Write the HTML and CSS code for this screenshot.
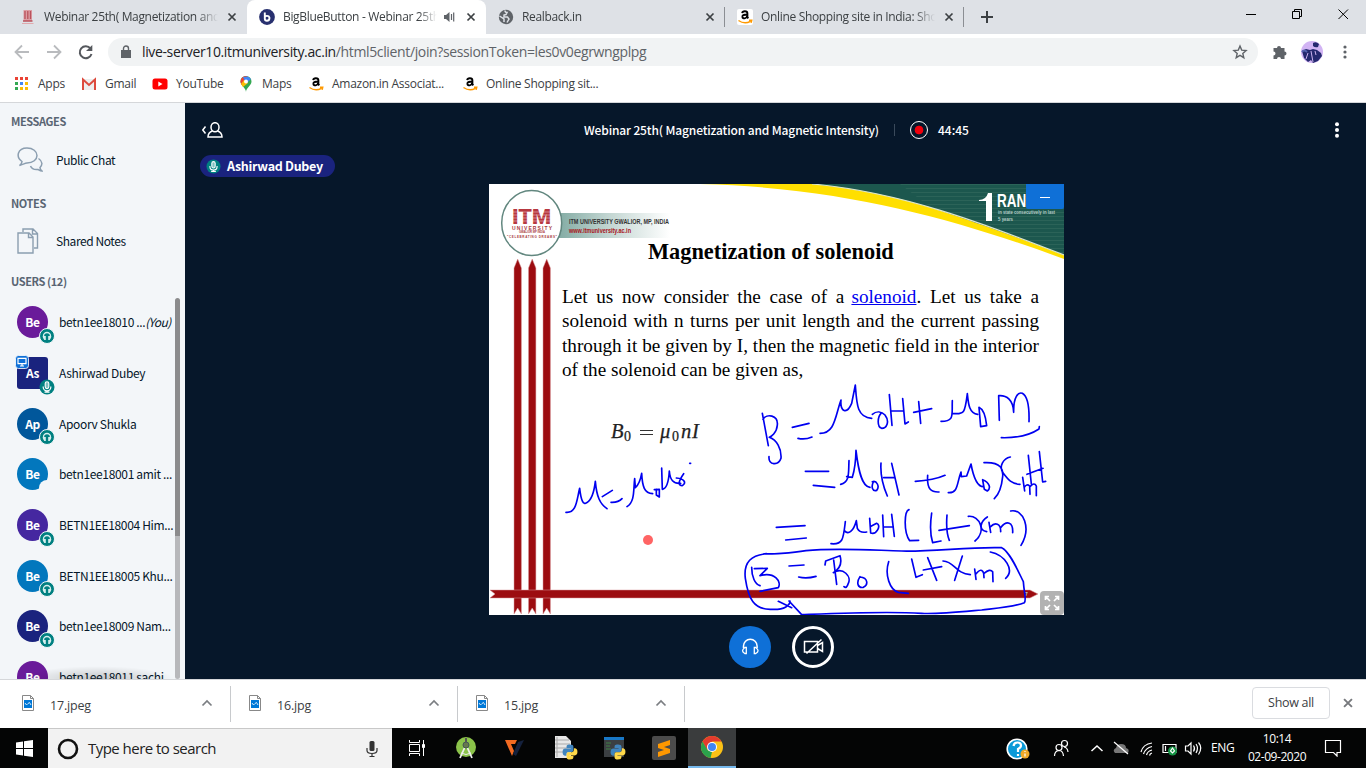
FILE: index.html
```html
<!DOCTYPE html>
<html lang="en">
<head>
<meta charset="utf-8">
<title>BigBlueButton - Webinar 25th</title>
<link rel="stylesheet" href="styles.css">
</head>
<body>
<svg class="defs" width="0" height="0">
  <symbol id="x" viewBox="0 0 16 16"><path d="M4.500 4.500l7 7M11.500 4.500l-7 7" stroke="currentColor" stroke-width="1.700"/></symbol>
  <symbol id="amazon" viewBox="0 0 16 16"><rect width="16" height="16" rx="2" fill="#fff"/><path d="M5.200 4.200C5.500 1.600 10.400 1.500 10.400 4.500V8.200l.9 1.200M10.200 5.500C6.500 5.500 5.300 6.300 5.400 7.900c.2 2.300 4.300 1.800 4.800-.8" fill="none" stroke="#000" stroke-width="1.900"/><path d="M1.500 11.500q6 4.200 12 .8M12 11.300l2.700-.1-.6 2.500" fill="none" stroke="#f90" stroke-width="1.500"/></symbol>
  <symbol id="head" viewBox="0 0 16 16"><circle cx="8" cy="8" r="7.500" fill="#008081" stroke="#f3f6f9"/><path d="M4.500 9.500V8a3.500 3.500 0 0 1 7 0v1.500" fill="none" stroke="#d5eeee" stroke-width="1.300"/><path d="M3.800 8h3v3.900H5.300Q3.800 11 3.800 8M12.200 8H9.200v3.900h1.500Q12.200 11 12.200 8" fill="#d5eeee"/></symbol>
  <symbol id="mic" viewBox="0 0 16 16"><circle cx="8" cy="8" r="7.500" fill="#008081"/><rect x="6.200" y="2.800" width="3.600" height="6.800" rx="1.800" fill="#7fc0c0" stroke="#fff" stroke-width="1.100"/><path d="M4.200 7.500v.8a3.800 3.500 0 0 0 7.600 0v-.8M8 11.800v1.600M5.500 13.200h5" fill="none" stroke="#fff" stroke-width="1.200"/></symbol>
  <symbol id="file" viewBox="0 0 14 16"><path d="M1.500.5h8l3 3v12h-11z" fill="#fff" stroke="#888"/><path d="M9.500.5v3h3" fill="none" stroke="#888"/><path d="M3 5h8v8H3z" fill="#0078d7"/><path d="M4 8l1.500 2L7 8.500 8.500 7.500 10 10" fill="none" stroke="#fff" stroke-width=".8"/></symbol>
  <symbol id="up" viewBox="0 0 12 12"><path d="M1.500 8.500L6 4l4.500 4.500" fill="none" stroke="#7b7e82" stroke-width="1.700"/></symbol>
  <symbol id="python" viewBox="0 0 14 14"><path d="M7 .5c-3 0-3 1-3 3h3.500V4H3C1 4 .500 5.500 .500 7.200s.7 3 2.500 3h1V8.500Q4 7 5.500 7h3Q10 7 10 5.500v-3Q10 .5 7 .5" fill="#4084bd"/><path d="M7 13.500c3 0 3-1 3-3H6.500V10H11c2 0 2.500-1.500 2.500-3.200s-.7-3-2.500-3h-.6v1.700Q10 7.300 8.500 7.300h-3Q4 7.500 4 9v2.500q0 2 3 2" fill="#ffd94a"/></symbol>
</svg>

<header class="tabs">
  <div class="tab">
    <svg class="i16" viewBox="0 0 16 16"><path d="M3.500 1h8.500v11H3.500z" fill="#dc9da3"/><path d="M5 2v8M7.800 2v8M10.500 2v8M3 12h9.500" stroke="#b9525c" stroke-width="1.300"/><path d="M2 14.500h11.500" stroke="#dfa9ad"/></svg>
    <span class="ttl">Webinar 25th( Magnetization and</span><svg class="i16"><use href="#x"/></svg>
  </div>
  <div class="tab active">
    <svg class="i16" viewBox="0 0 16 16"><circle cx="8" cy="8" r="7.900" fill="#28306f"/><path d="M5.800 3.500v6.200q0 2 2.200 2t2.400-2V8.500q-.4-1.600-2.400-1.600-1.500 0-2.200 1" fill="none" stroke="#fff" stroke-width="1.900"/></svg>
    <span class="ttl short">BigBlueButton - Webinar 25th</span>
    <svg class="i16 spk" viewBox="0 0 16 16"><path d="M3 6h2l3.500-3v10L5 10H3z" fill="#5f6368"/><path d="M10.500 5v6M12.700 3.500v9" stroke="#5f6368" stroke-width="1.200"/></svg>
    <svg class="i16"><use href="#x"/></svg>
  </div>
  <div class="tab sep">
    <svg class="i16" viewBox="0 0 16 16"><circle cx="8" cy="8" r="7.200" fill="#5f6368"/><path d="M7 1.500q0 2 2 2l-1 2-2 .5v2h3.500L11 10l-2 3.500M1.500 7L6 10v3" fill="none" stroke="#dee1e6" stroke-width="1.500"/></svg>
    <span class="ttl">Realback.in</span><svg class="i16"><use href="#x"/></svg>
  </div>
  <div class="tab sep">
    <svg class="i16"><use href="#amazon"/></svg>
    <span class="ttl">Online Shopping site in India: Shop</span><svg class="i16"><use href="#x"/></svg>
  </div>
  <svg class="plus" width="14" height="14" viewBox="0 0 14 14"><path d="M7 1v12M1 7h12" stroke="#3c4043" stroke-width="2"/></svg>
  <svg class="win" width="104" height="12" viewBox="0 0 104 12" fill="none" stroke="#000"><path d="M1 6.500h10M47.500 3.500h7v7h-7zM49.500 3.500v-2h7v7h-2M93.500 1.500l9.500 9.500M103 1.500L93.500 11"/></svg>
</header>

<div class="toolbar">
  <svg width="84" height="20" viewBox="0 0 84 20" fill="none"><path d="M15 10H2M8 3.500L1.500 10 8 16.500M33 10h13M40 3.500L46.500 10 40 16.500" stroke="#b9bbbe" stroke-width="1.800"/><path d="M76.500 6.500a6 6 0 1 0 1 5.500" stroke="#55585d" stroke-width="2"/><path d="M78.300 3v6H72z" fill="#55585d"/></svg>
  <div class="omni">
    <svg width="10" height="14" viewBox="0 0 10 14"><path d="M0 5h10v8H0z" fill="#5f6368"/><path d="M2.500 6V3.500a2.500 2.500 0 0 1 5 0V6" fill="none" stroke="#5f6368" stroke-width="1.400"/></svg>
    <span class="url">live-server10.itmuniversity.ac.in<i>/html5client/join?sessionToken=les0v0egrwngplpg</i></span>
    <svg class="star" width="16" height="16" viewBox="0 0 16 16"><path d="M8 2l1.700 4.100 4.400.4-3.300 2.900 1 4.300L8 11.400l-3.800 2.300 1-4.300-3.300-2.900 4.400-.4z" fill="none" stroke="#5f6368" stroke-width="1.400"/></svg>
  </div>
  <svg class="ext" width="16" height="16" viewBox="0 0 16 16"><path d="M1.500 4H5a2 2 0 1 1 4 0h3.500v3.500a2 2 0 1 1 0 4V15H9a2 2 0 0 0-4 0H1.500v-3.500a2 2 0 0 0 0-4z" fill="#5f6368"/></svg>
  <svg class="ava" width="22" height="22" viewBox="0 0 22 22"><circle cx="11" cy="11" r="11" fill="#d2b4f4"/><path d="M1 10l4-2 4 1 3-1 4 1 4 3 1 3-4 5-5 2-2-3-3 2-4-4zM12 2q3-2 6 1l-1 3q-3 1-5-1z" fill="#25296f"/><path d="M10 10l2 11M7 12l-2 6M14 10l1 4" stroke="#cdb3f0"/><path d="M1 11q2-3 5 0" stroke="#5563ae" fill="none" stroke-width="2"/></svg>
  <svg width="4" height="14" viewBox="0 0 4 14" fill="#5f6368"><circle cx="2" cy="2" r="1.600"/><circle cx="2" cy="7" r="1.600"/><circle cx="2" cy="12" r="1.600"/></svg>
</div>

<nav class="marks">
  <span class="mk m1"><svg class="i16" viewBox="0 0 16 16"><path d="M2 1h3v3H2zM7 1h3v3H7zM12 1h3v3h-3z" fill="#ea4335"/><path d="M2 6h3v3H2z" fill="#34a853"/><path d="M7 6h3v3H7z" fill="#4285f4"/><path d="M12 6h3v3h-3zM12 11h3v3h-3zM7 11h3v3H7z" fill="#fbbc05"/><path d="M2 11h3v3H2z" fill="#34a853"/></svg>Apps</span>
  <span class="mk m2"><svg class="i16" viewBox="0 0 16 16"><path d="M1 3h14v11H1z" fill="#eee"/><path d="M2 14V3.500l6 5.500 6-5.500V14" fill="none" stroke="#dd4b3e" stroke-width="2"/></svg>Gmail</span>
  <span class="mk m3"><svg class="i16" viewBox="0 0 16 16"><rect x=".5" y="2.500" width="15" height="11" rx="2.500" fill="#f00"/><path d="M6.300 5.500v5l4.200-2.500z" fill="#fff"/></svg>YouTube</span>
  <span class="mk m4"><svg class="i16" viewBox="0 0 16 16"><path d="M8 16C8 12 2.500 9.500 2.500 5.500a5.500 5.500 0 0 1 11 0C13.500 9.500 8 12 8 16" fill="#34a853"/><path d="M2.500 6A5.500 5.500 0 0 1 8 0l2 1-6.500 8z" fill="#ea4335"/><path d="M5 1l5-.5L13 3 8 8z" fill="#4285f4"/><path d="M3 8l3-4 4 3-5 4z" fill="#fbbc04"/><circle cx="8" cy="5.500" r="2" fill="#fff"/></svg>Maps</span>
  <span class="mk m5"><svg class="i16"><use href="#amazon"/></svg>Amazon.in Associat...</span>
  <span class="mk m6"><svg class="i16"><use href="#amazon"/></svg>Online Shopping sit...</span>
</nav>

<main class="app">
  <aside class="side">
    <h2>MESSAGES</h2>
    <div class="item"><svg width="26" height="26" viewBox="0 0 26 26" fill="none" stroke="#8b9eb0" stroke-width="1.500"><path d="M5 14.500C-1.500 10 .5 1 10 1c6 0 10 3.500 10 7.500S16 16 10 16c-2 0-4 1.500-7.500 2.500Q5 16.500 5 14.500z"/><path d="M21.500 11.500c4.500 3 4 6.500 1.500 9 0 1.500.5 2.500 2 3.500-2 0-3-1-4-1.500-4 .5-6.500-1-7.500-3.500"/></svg><span>Public Chat</span></div>
    <h2 class="h-notes">NOTES</h2>
    <div class="item"><svg width="26" height="26" viewBox="0 0 26 26" fill="none" stroke="#8b9eb0" stroke-width="1.400"><path d="M1 5h11l4 4v16H1zM11.500 5v4.500H16M6 4V1h10l4.500 4.500V20H17M15.500 1v5h5"/></svg><span>Shared Notes</span></div>
    <h2 class="h-users">USERS (12)</h2>
    <div class="users">
      <div class="u"><b class="av c1">Be<svg><use href="#head"/></svg></b><span>betn1ee18010 ... <em>(You)</em></span></div>
      <div class="u"><b class="av sq c2">As<svg><use href="#mic"/></svg><svg class="pres" viewBox="0 0 14 14"><rect x=".5" y=".5" width="13" height="13" rx="3" fill="#0f70d7" stroke="#fff" stroke-width=".8"/><path d="M3 3.300h8v5.400H3zM5 11h4M7 9v2" fill="none" stroke="#fff" stroke-width="1.200"/></svg></b><span>Ashirwad Dubey</span></div>
      <div class="u"><b class="av c3">Ap<svg><use href="#head"/></svg></b><span>Apoorv Shukla</span></div>
      <div class="u"><b class="av c4">Be<svg viewBox="0 0 16 16"><circle cx="8" cy="8" r="8" fill="#f3f6f9"/></svg></b><span>betn1ee18001 amit ...</span></div>
      <div class="u"><b class="av c5">Be<svg><use href="#head"/></svg></b><span>BETN1EE18004 Him...</span></div>
      <div class="u"><b class="av c4">Be<svg><use href="#head"/></svg></b><span>BETN1EE18005 Khu...</span></div>
      <div class="u"><b class="av c2">Be<svg><use href="#head"/></svg></b><span>betn1ee18009 Nam...</span></div>
      <div class="u"><b class="av c1">Be</b><span>betn1ee18011 sachi</span></div>
      <div class="shade"></div>
      <div class="scroll"></div>
    </div>
  </aside>

  <section class="stage">
    <div class="bar">
      <svg class="toggle" width="22" height="16" viewBox="0 0 22 16" fill="none" stroke="#fff" stroke-width="1.500"><path d="M3.500 4.500L.800 8l2.700 3.500"/><ellipse cx="13" cy="5.200" rx="4" ry="4.500"/><path d="M10.500 9C7.500 10 6 12 6 15h14c0-3-1.500-5-4.500-6"/></svg>
      <span class="room">Webinar 25th( Magnetization and Magnetic Intensity)</span>
      <span class="vsep"></span>
      <span class="rec"></span>
      <span class="time">44:45</span>
      <svg class="dots" width="6" height="16" viewBox="0 0 6 16" fill="#fff"><circle cx="3" cy="2.200" r="2"/><circle cx="3" cy="8" r="2"/><circle cx="3" cy="13.800" r="2"/></svg>
    </div>
    <div class="talk"><svg width="15" height="15"><use href="#mic"/></svg><span>Ashirwad Dubey</span></div>

    <div class="slide">
      <svg class="art" width="575" height="431" viewBox="489 184 575 431">
        <defs>
          <pattern id="lines" width="20" height="4" patternUnits="userSpaceOnUse"><rect width="20" height="4" fill="#1c574e"/><rect width="20" height="1" fill="#2b6358"/></pattern>
          <linearGradient id="band"><stop offset="0" stop-color="#7fa9a1"/><stop offset=".45" stop-color="#c0d4d0"/><stop offset="1" stop-color="#fff"/></linearGradient>
        </defs>
        <path d="M700 184C850 188 960 221 1064 259V184z" fill="#ffdf00"/>
        <path d="M812 184C900 192 980 222 1064 255V184z" fill="#1c574e"/>
        <path d="M900 184h164v71C1020 238 960 217 930 207z" fill="url(#lines)"/>
        <path d="M812 184C900 192 980 222 1064 255" fill="none" stroke="#dce5cc" stroke-width="1.200"/>
        <path d="M979 200q7 0 9-7h4v28h-6v-20h-7z" fill="#fff"/>
        <text x="997" y="207" class="rank" textLength="39" lengthAdjust="spacingAndGlyphs">RANK</text>
        <text x="998" y="214" class="tiny" textLength="57" lengthAdjust="spacingAndGlyphs">in state consecutively in last</text>
        <text x="998" y="220.500" class="tiny" textLength="15" lengthAdjust="spacingAndGlyphs">5 years</text>
        <path d="M555 213h115v25H555z" fill="url(#band)"/>
        <text x="569" y="224" class="uni" textLength="100" lengthAdjust="spacingAndGlyphs">ITM UNIVERSITY GWALIOR, MP, INDIA</text>
        <text x="569" y="232.500" class="uni red" textLength="62" lengthAdjust="spacingAndGlyphs">www.itmuniversity.ac.in</text>
        <ellipse cx="531.700" cy="223" rx="30" ry="32.500" fill="#fff" stroke="#62877f" stroke-width="1.500"/>
        <text x="512" y="224" class="itm" textLength="39" lengthAdjust="spacingAndGlyphs">ITM</text>
        <path d="M512 212h40M512 215h40M512 218h40M512 221h40" stroke="#fff" stroke-width=".4"/>
        <text x="512" y="229.500" class="logo" font-size="5" textLength="40">UNIVERSITY</text>
        <text x="519" y="233" class="logo" font-size="2.600" textLength="26" lengthAdjust="spacingAndGlyphs">GWALIOR MP INDIA</text>
        <text x="507" y="237.500" class="logo" font-size="3" textLength="50">"CELEBRATING DREAMS"</text>
        <g fill="#9c0c10" stroke="#d99a9c" stroke-width=".5">
          <path d="M514 614V268l3.700-9 3.700 9v346l-3.700-6zM528.500 614V268l3.700-9 3.700 9v346l-3.700-6zM543 614V268l3.700-9 3.700 9v346l-3.700-6z"/>
          <path d="M490 590h540l8 4-8 4H490l5-4z"/>
        </g>
        <text x="1025" y="596" class="tiny">7</text>
        <g class="eq"><text x="611" y="438" font-size="20.500">B</text><text x="624" y="441" font-size="14" font-style="normal">0</text><path d="M640 430.500h13M640 434.500h13" stroke="#333" stroke-width="1.200"/><text x="660" y="438" font-size="20.500">μ</text><text x="672" y="441" font-size="14" font-style="normal">0</text><text x="681" y="438" font-size="20.500">n</text><text x="692" y="438" font-size="20.500">I</text></g>
        <circle cx="648" cy="540" r="5" fill="#ff6464"/>
        <g class="ink" transform="translate(485 400) scale(.33333)"><path d="M243 337C275 340 275 300 284 265Q290 320 305 308C320 300 328 270 331 244C335 290 345 312 366 326M352 290L382 271M378 307Q400 308 411 296M426 320C450 305 445 270 449 236L451 263Q465 250 470 220C472 260 478 280 503 281M508 269L523 268V291L514 285V268M530 204L532 268Q550 265 553 213C555 240 565 252 587 250M574 234C600 236 605 250 591 257C575 255 585 237 596 221M614 190h3"/></g>
        <g class="ink" transform="translate(735 380) scale(.33333)"><path d="M82 100L100 197M84 118C95 100 130 105 127 135C125 160 108 170 103 172C125 180 140 205 138 235C130 258 100 256 102 230M172 142L222 130M189 175Q210 180 231 171M255 160C300 160 300 110 318 60C315 95 335 105 350 70L361 15C365 70 365 112 410 115M412 103C425 92 440 95 450 105C465 125 455 145 440 145C425 140 428 110 438 100M463 44L471 136M468 93H503M503 56L510 132L520 126M536 97L590 86M551 65L557 130M618 124C660 124 650 105 652 62M652 100C690 105 690 95 697 41C700 70 702 100 728 103M732 82L737 140L755 137Q750 90 732 82M793 121L791 47C815 45 835 60 836 97C835 50 850 35 862 40C880 50 883 90 882 125M799 173Q870 175 912 147L913 140"/><path d="M211 274H281M235 316L299 322M317 313C345 305 340 280 342 242M335 290L352 292Q362 260 363 211C370 270 380 320 405 322M412 305C425 300 435 320 425 331C412 335 408 320 415 306M438 249C435 290 445 320 457 348M446 293H478M470 250L492 345M541 304C580 302 610 295 630 286M578 286C575 330 590 337 612 336M640 338C670 340 665 310 678 276L679 290L695 288L708 252C715 290 725 320 745 320M743 300L748 328L757 333C768 325 765 308 743 299M747 248C800 245 805 270 803 290C800 320 790 345 778 356M826 231C805 235 790 260 805 280C820 300 830 312 855 313M863 292L869 333M868 322Q875 310 884 318L885 343M885 320Q898 305 904 318V347M880 226L889 312M876 283L924 265M913 215L923 306L932 304"/></g>
        <g class="ink" transform="translate(735 505) scale(.33333)"><path d="M124 67L210 62M152 105L214 99M288 116C325 120 325 100 331 50M328 77C340 90 355 80 364 47L367 70Q375 85 395 81M404 40L407 84C425 90 440 60 425 55L408 64M443 30L446 95M447 66H472M470 28L478 94M522 14C508 18 505 80 524 107L551 106M590 24Q582 80 593 113L618 108M612 76L703 62M636 30Q632 80 643 106M700 34C735 30 755 80 720 108M757 36C735 50 730 75 755 80M762 52L767 82M767 65C780 50 798 55 797 80M797 68C815 45 835 50 833 83M827 18C865 10 890 70 858 121"/><path d="M213 137C300 128 400 135 500 138C600 140 700 125 800 128C825 140 850 200 865 230C868 270 875 285 868 293C840 305 780 310 740 315C660 322 600 328 560 325C450 318 300 325 200 329L162 288M213 137C170 145 100 148 95 146C50 150 25 170 31 220C40 280 55 315 110 313C150 315 165 300 165 288M130 289L170 308M50 187C50 215 60 238 75 242M58 191L97 190L75 212C120 200 140 230 130 248L75 259M162 183L207 180M191 216Q215 222 243 214M270 180L272 168L315 152Q325 185 295 203C325 185 350 215 340 235Q335 252 327 245M296 165L305 238M375 215C362 235 370 250 385 247C400 240 400 218 375 216M461 170C448 210 465 255 490 262L520 265M530 162L543 217L562 209M565 195L620 185M578 158L605 226M624 168C660 170 660 205 706 209M682 153L659 226M719 192L723 223M722 208Q740 185 746 205L747 218M747 205Q765 190 773 200L774 230M766 141C810 150 840 195 812 220"/></g>
      </svg>
      <h1>Magnetization of solenoid</h1>
      <div class="para"><p>Let us now consider the case of a <a>solenoid</a>. Let us take a</p><p>solenoid with n turns per unit length and the current passing</p><p>through it be given by I, then the magnetic field in the interior</p><p class="last">of the solenoid can be given as,</p></div>
      <div class="min"></div>
      <svg class="full" width="24" height="24" viewBox="0 0 24 24"><rect width="24" height="24" rx="4" fill="#b2b2b2"/><path d="M5.500 9V5.500H9M15 5.500h3.500V9M18.500 15v3.500H15M9 18.500H5.500V15M6 6l4 4M18 6l-4 4M18 18l-4-4M6 18l4-4" fill="none" stroke="#fff" stroke-width="1.700"/></svg>
    </div>

    <div class="acts">
      <svg width="42" height="42" viewBox="0 0 42 42"><circle cx="21" cy="21" r="21" fill="#0f70d7"/><path d="M14.500 22v-2a6.800 6.800 0 0 1 13.600 0v2" fill="none" stroke="#fff" stroke-width="1.500"/><path d="M15.800 21.500h1.500v6h-1.500q-4.500-2.500 0-6zM26.800 21.500h-1.500v6h1.500q4.500-2.500 0-6z" fill="#0f70d7" stroke="#fff" stroke-width="1.300"/></svg>
      <svg width="42" height="42" viewBox="0 0 42 42"><circle cx="21" cy="21" r="19.500" fill="none" stroke="#fff" stroke-width="3"/><path d="M12.500 15.500h13v10.500h-13zM25.500 19.500l5-3v9l-5-3M14.500 27.500L29.500 13.500" fill="none" stroke="#fff" stroke-width="1.500"/></svg>
    </div>
  </section>
</main>

<div class="dl">
  <div class="d"><svg width="14" height="16"><use href="#file"/></svg><span>17.jpeg</span><svg width="12" height="12"><use href="#up"/></svg></div>
  <div class="d"><svg width="14" height="16"><use href="#file"/></svg><span>16.jpg</span><svg width="12" height="12"><use href="#up"/></svg></div>
  <div class="d"><svg width="14" height="16"><use href="#file"/></svg><span>15.jpg</span><svg width="12" height="12"><use href="#up"/></svg></div>
  <span class="all">Show all</span>
  <svg class="dlx" width="18" height="18"><use href="#x"/></svg>
</div>

<footer class="task">
  <div class="start"><svg width="17" height="17" viewBox="0 0 17 17" fill="#fff"><path d="M0 2.500L7 1.500V8H0zM8 1.300L17 0v8H8zM0 9h7v6.500l-7-1zM8 9h9v8l-9-1.300z"/></svg></div>
  <div class="search">
    <svg width="22" height="22" viewBox="0 0 22 22"><circle cx="11" cy="11" r="9" fill="none" stroke="#111" stroke-width="2.600"/></svg>
    <span>Type here to search</span>
    <svg width="12" height="18" viewBox="0 0 12 18"><rect x="3.500" y="1" width="5" height="10" rx="1.500" fill="#333"/><path d="M1 8v2.500q0 3 5 3t5-3V8M6 13.500V17M3.500 16.500h5" fill="none" stroke="#333" stroke-width="1.200"/></svg>
  </div>
  <div class="apps">
    <div><svg width="18" height="16" viewBox="0 0 18 16" fill="none" stroke="#fff"><path d="M1.500 4.500h10v7h-10zM1.500 0v2.500h10V0M1.500 16v-2.500h10V16M15.500 0v4M15.500 8v8"/><path d="M14.500 4.500h2v3h-2z" fill="#fff"/></svg></div>
    <div><svg width="24" height="24" viewBox="0 0 24 24"><circle cx="12" cy="11" r="10" fill="#8bc34a"/><path d="M10.500 12L6 22M13.500 12L18 22" stroke="#eee" stroke-width="1.800"/><path d="M7 17q5 3 10 0" fill="none" stroke="#eee"/><circle cx="12" cy="9" r="3" fill="#66784d" stroke="#455"/><path d="M12 2v4" stroke="#555" stroke-width="2"/></svg></div>
    <div><svg width="22" height="18" viewBox="0 0 22 18"><path d="M1 1h12l-2 4H7l3 7-2 5z" fill="#f26a21"/><path d="M14 3l6-2-8 16-3-2z" fill="#14213d"/></svg></div>
    <div><svg width="26" height="26" viewBox="0 0 26 26"><path d="M3 1h11l5 5v17H3z" fill="#e8e8e8"/><path d="M5 2v20M3 5h14M3 9h15M3 13h15M3 17h15" stroke="#aaa"/><svg x="10" y="9" width="16" height="16"><use href="#python"/></svg></svg></div>
    <div><svg width="26" height="26" viewBox="0 0 26 26"><path d="M3 3h20v19H3z" fill="#3b3f42"/><path d="M3 2h20v3H3z" fill="#1979c8"/><path d="M5 8h5M5 11h4M5 14h5" stroke="#3f8045"/><svg x="9" y="9" width="16" height="16"><use href="#python"/></svg></svg></div>
    <div><svg width="24" height="24" viewBox="0 0 24 24"><rect width="24" height="24" rx="2" fill="#4b4b4b"/><path d="M6 8l12-4v5l-6 2 6 2v4L6 21v-5l6-2-6-2z" fill="#ff9800"/></svg></div>
    <div class="on"><svg width="22" height="22" viewBox="0 0 22 22"><circle cx="11" cy="11" r="11" fill="#fbc116"/><path d="M1.500 5.500A11 11 0 0 1 20.500 5.500H11L6 14z" fill="#e33b2e"/><path d="M1.500 5.500L6.500 14l4.500 2-1.500 6A11 11 0 0 1 1.500 5.500" fill="#2ba24c"/><circle cx="11" cy="11" r="5" fill="#fff"/><circle cx="11" cy="11" r="4" fill="#4285f4"/></svg></div>
  </div>
  <div class="tray">
    <svg width="216" height="40" viewBox="1004 728 216 40" fill="none" stroke="#fff" stroke-width="1.200">
      <circle cx="1019" cy="749" r="9.800" fill="#0b9ad8" stroke-width="1.600"/><path d="M1015.500 746q.5-3.500 4-3.500t3.500 3q0 2-3 3.500v3M1020 754v2" stroke-width="2.200"/><circle cx="1027" cy="754" r="4.500" fill="#f0a928" stroke="none"/><path d="M1027 751v1M1027 753.500v3"/>
      <circle cx="1061" cy="747.500" r="3"/><path d="M1056.500 756q0-5 4.500-5.500 4 0 4.500 5.500"/><circle cx="1066.500" cy="743.500" r="3"/><path d="M1066 747q3.500.500 4 5"/>
      <path d="M1093.500 751l5.500-5 5.500 5" stroke-width="1.500"/>
      <path d="M1117 753q-3-3 1-5 1-4 5-4 5 0 5 4 4 1 2 5z" fill="#777" stroke="none"/><path d="M1116 742l14 12"/>
      <path d="M1143 752q2-8 11-9M1145.500 754q2-6 8.500-7.500M1148.500 755q1-4 5.500-5M1151.500 755.500q.500-2 2.500-2.500"/>
      <path d="M1165 744.500h13v8h-13zM1167.500 746v5"/><circle cx="1174.500" cy="751" r="4.500" fill="#159344" stroke="none"/><path d="M1174.500 748l2 3-2 2-2-2z"/>
      <path d="M1187.500 746h2.500l3-3v11l-3-3h-2.500zM1195.500 745.500q2 3 0 6M1198 744q3 4 0 9M1200.500 742.500q4.500 5.500 0 12"/>
    </svg>
    <span class="eng">ENG</span>
    <span class="clock">10:14<br>02-09-2020</span>
    <svg width="18" height="18" viewBox="0 0 18 18" fill="none" stroke="#fff" stroke-width="1.200"><path d="M1.500 1.500h15v12H13v3.500L9.500 13.500h-8z"/></svg>
  </div>
</footer>
</body>
</html>
```
FILE: styles.css
```css
* { box-sizing: border-box; }
body { margin: 0; width: 1366px; height: 768px; overflow: hidden; display: flex; flex-direction: column; background: #fff; color: #3c4043; font: 12px/16px "Open Sans", "Noto Sans", sans-serif; }
svg { display: block; flex: none; }
.defs { position: absolute; }
.i16 { width: 16px; height: 16px; color: #3c4043; }

.tabs { height: 34px; background: #dee1e6; display: flex; align-items: center; padding-left: 8px; flex: none; }
.tab { width: 239px; height: 34px; padding: 0 7px 0 12px; display: flex; align-items: center; flex: none; }
.tab.active { background: #fff; border-radius: 8px 8px 0 0; }
.tab.sep { border-right: 1px solid #8b8e93; height: 20px; padding-right: 6px; }
.ttl { width: 174px; margin: 0 6px 0 8px; white-space: nowrap; overflow: hidden; letter-spacing: -0.33px; mask-image: linear-gradient(90deg, #000 88%, transparent); }
.ttl.short { width: 154px; margin-right: 4px; }
.spk { margin-right: 6px; }
.plus { margin-left: 16px; }
.win { margin-left: auto; margin-right: 17px; margin-bottom: 6px; }

.toolbar { height: 36px; display: flex; align-items: center; padding-left: 14px; flex: none; }
.omni { width: 1150px; height: 28px; margin-left: 10px; border-radius: 14px; background: #f1f3f4; display: flex; align-items: center; padding: 0 10px 0 13px; }
.url { margin-left: 11px; font-size: 14px; color: #202124; letter-spacing: -0.365px; white-space: nowrap; }
.url i { font-style: normal; color: #5f6368; }
.star { margin-left: auto; }
.ext { margin: 0 13px 0 14px; }
.ava { margin-right: 20px; }

.marks { height: 33px; padding: 0 0 4px 13px; border-bottom: 1px solid #d5d7da; display: flex; align-items: center; flex: none; }
.mk { display: flex; align-items: center; gap: 8px; white-space: nowrap; letter-spacing: -0.27px; }
.m1 { width: 68px; gap: 9px; } .m2 { width: 71px; } .m3 { width: 86px; } .m4 { width: 70px; } .m5 { width: 154px; }

.app { height: 576px; display: flex; flex: none; font-family: "Noto Sans CJK SC", "Noto Sans", sans-serif; }
.side { width: 185px; background: #f3f6f9; color: #06172a; display: flex; flex-direction: column; overflow: hidden; flex: none; }
.side h2 { margin: 10px 0 0 11px; font-size: 11px; line-height: 16px; font-weight: 700; letter-spacing: -.4px; color: #596573; flex: none; }
.item { height: 26px; margin: 18px 0 0 17px; display: flex; align-items: center; gap: 13px; flex: none; font-size: 12px; letter-spacing: -.43px; }
.item span { padding-bottom: 1px; }
.side .h-notes { margin-top: 22px; }
.side .h-users { margin-top: 19px; }
.side .h-notes + .item { margin-top: 17px; }
.users { flex: 1; margin-top: 9px; position: relative; overflow: hidden; }
.u { height: 50.700px; display: flex; align-items: center; padding-left: 17px; gap: 11px; white-space: nowrap; font-size: 12px; letter-spacing: -.34px; position: relative; top: -1px; }
.u span { width: 118px; }
.u em { margin-left: -2.500px; letter-spacing: -.6px; }
.av { position: relative; width: 31px; height: 32px; border-radius: 50%; color: #fff; display: flex; align-items: center; justify-content: center; font-weight: 700; font-size: 12px; flex: none; }
.av.sq { border-radius: 3px; }
.av svg { position: absolute; width: 16px; height: 16px; left: 21.500px; top: 21.500px; }
.av svg.pres { width: 14px; height: 14px; left: -2px; top: -2px; }
.c1 { background: #6a1b9a; } .c2 { background: #1a237e; } .c3 { background: #01579b; } .c4 { background: #0277bd; } .c5 { background: #4527a0; }
.shade { position: absolute; left: 20px; right: 10px; bottom: 0; height: 13px; background: radial-gradient(ellipse at 50% 100%, rgba(0,0,0,.2), transparent 70%); }
.scroll { position: absolute; left: 175px; top: 0; width: 5px; height: 100%; border-radius: 3px; background: linear-gradient(#8b8b8d 238px, #b7b8bb 238px); }

.stage { flex: 1; background: #06172a; color: #fff; display: flex; flex-direction: column; }
.bar { height: 54px; padding: 0 26px 0 17px; display: flex; align-items: center; flex: none; font-size: 12px; font-weight: 500; }
.room { margin-left: 360px; white-space: nowrap; width: 310px; letter-spacing: -.14px; }
.vsep { width: 1px; height: 12px; background: #3a4a5b; }
.rec { width: 18px; height: 18px; margin: 0 10px 0 15px; border: 1.500px solid #fff; border-radius: 50%; background: radial-gradient(circle, #f0000c 4px, transparent 4.700px); }
.dots { margin-left: auto; }
.talk { width: 135px; height: 22px; margin: -2px 0 0 15px; border-radius: 11px; background: #1a237e; display: flex; align-items: center; gap: 6px; padding-left: 6px; font-size: 12.500px; letter-spacing: -.3px; font-weight: 700; white-space: nowrap; flex: none; }
.talk span { padding-bottom: 1px; }
.slide { position: relative; width: 575px; height: 431px; margin: 7px 0 0 304px; background: #fff; flex: none; color: #000; font-family: "Liberation Serif", serif; padding-top: 56px; overflow: hidden; }
.art { position: absolute; left: 0; top: 0; }
.slide h1 { position: relative; margin: 0 0 0 159px; font-size: 22.350px; line-height: 24px; white-space: nowrap; }
.para { position: relative; width: 477px; margin: 20.500px 0 0 73px; font-size: 19.200px; line-height: 24.600px; }
.para p { margin: 0; text-align-last: justify; white-space: nowrap; }
.para .last { text-align-last: left; }
.para a { color: #0000f0; text-decoration: underline; margin-left: -1.500px; }
.min { position: absolute; right: 0; top: 0; width: 38px; height: 25px; background: #0f70d7; border-radius: 0 0 2px 2px; }
.min::after { content: ""; position: absolute; left: 14px; top: 13px; width: 10px; height: 1px; background: #fff; }
.full { position: absolute; right: 0; bottom: 0; }
.rank { font: 700 18px "Liberation Sans", sans-serif; fill: #fff; }
.tiny { font: 700 5px "Liberation Sans", sans-serif; fill: #b5ccc6; }
.uni { font: 700 6.500px "Liberation Sans", sans-serif; fill: #333; }
.uni.red { fill: #a7141b; }
.itm { font: 900 20px Roboto, sans-serif; fill: #b73840; }
.logo { font-family: "Liberation Sans", sans-serif; font-weight: 700; fill: #a83a40; }
.eq { font-family: "Liberation Serif", serif; font-style: italic; fill: #222; stroke: #222; stroke-width: .25; }
.ink { fill: none; stroke: #0000f0; stroke-width: 5; stroke-linecap: round; stroke-linejoin: round; }
.acts { display: flex; gap: 21px; margin: 11px 0 0 544px; }

.dl { height: 49px; border-top: 1px solid #d5d7da; display: flex; align-items: center; background: #fff; flex: none; font-size: 12.500px; }
.d { width: 227px; height: 36px; border-right: 1px solid #c8cacd; padding: 0 17px 3px 17px; display: flex; align-items: center; flex: none; }
.d:first-child { width: 231px; padding-left: 21px; }
.d span { flex: 1; margin-left: 15px; padding-top: 6px; letter-spacing: -.2px; }
.all { width: 78px; height: 32px; margin-left: auto; margin-bottom: 2px; border: 1px solid #dadce0; border-radius: 4px; text-align: center; line-height: 29px; letter-spacing: -.3px; }
.dlx { margin: 0 9px 2px 9px; color: #77797d; }

.task { height: 40px; display: flex; align-items: center; background: #040505; color: #fff; flex: none; }
.start { width: 48px; padding-left: 16px; }
.search { width: 344px; height: 40px; background: #f2f2f2; border-top: 1px solid #c8c8c8; display: flex; align-items: center; padding: 0 14px 0 9px; color: #222; font-size: 15px; }
.search span { flex: 1; margin-left: 9px; letter-spacing: -.53px; padding-bottom: 2px; }
.apps { display: flex; }
.apps div { width: 49.400px; height: 40px; display: flex; align-items: center; justify-content: center; }
.apps .on { width: 48px; background: #3a3c3d; border-bottom: 2px solid #76b9ed; }
.tray { margin-left: auto; margin-right: 24px; display: flex; align-items: center; }
.eng { width: 32px; margin-left: -7px; letter-spacing: -.4px; }
.clock { width: 64px; margin: 0 15px 0 2px; text-align: center; line-height: 18px; letter-spacing: -.45px; white-space: nowrap; }
```
